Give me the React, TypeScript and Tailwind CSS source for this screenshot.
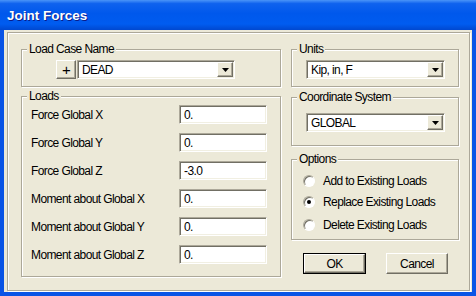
import React from "react";

const raised =
  "bg-[#ece9d8] border border-t-white border-l-white border-r-[#716f64] border-b-[#716f64] shadow-[inset_-1px_-1px_0_#aca899]";
const sunken =
  "bg-white border border-t-[#aca899] border-l-[#aca899] border-r-white border-b-white shadow-[inset_1px_1px_0_#716f64,inset_-1px_-1px_0_#f1efe2]";
const etched =
  "border border-[#aca899] shadow-[inset_1px_1px_0_#fff,1px_1px_0_#fff]";

function Legend({ children }: { children: React.ReactNode }) {
  return (
    <div className="-mt-[7px] ml-[5px] px-[2px] w-fit bg-[#ece9d8] leading-[13px] h-[13px] whitespace-nowrap">
      {children}
    </div>
  );
}

function Arrow() {
  return (
    <svg width="7" height="4" viewBox="0 0 7 4">
      <path d="M0 0H7L3.5 4Z" fill="#000" />
    </svg>
  );
}

function Combo({ value, w }: { value: string; w: string }) {
  return (
    <div className={`${sunken} ${w} h-[19px] flex items-stretch p-[1px]`}>
      <div className="flex-1 flex items-center pl-[3px] leading-none">{value}</div>
      <div className={`${raised} w-[16px] flex items-center justify-center`}>
        <Arrow />
      </div>
    </div>
  );
}

function Field({ value }: { value: string }) {
  return (
    <div className={`${sunken} w-[88px] h-[19px] flex items-center pl-[4px] leading-none`}>
      {value}
    </div>
  );
}

function Radio({ checked, label, cls }: { checked?: boolean; label: string; cls?: string }) {
  return (
    <div className={`flex items-center h-[14px] ${cls ?? ""}`}>
      <div className="w-[12px] h-[12px] rounded-full border border-t-[#aca899] border-l-[#aca899] border-r-white border-b-white bg-white shadow-[inset_1px_1px_0_#716f64] flex items-center justify-center">
        {checked && <div className="w-[4px] h-[4px] rounded-full bg-black" />}
      </div>
      <span className="ml-[8px] whitespace-nowrap">{label}</span>
    </div>
  );
}

export default function App() {
  const rows: [string, string][] = [
    ["Force Global X", "0."],
    ["Force Global Y", "0."],
    ["Force Global Z", "-3.0"],
    ["Moment about Global X", "0."],
    ["Moment about Global Y", "0."],
    ["Moment about Global Z", "0."],
  ];
  return (
    <div className="w-[476px] h-[296px] bg-[#0a54e6] flex flex-col font-['Liberation_Sans',Arial,sans-serif] text-[12px] tracking-[-0.6px] text-black">
      <div className="h-[30px] shrink-0 flex items-center pl-[7px] pt-[2px] bg-[linear-gradient(to_bottom,#4a94f8_0%,#0f62ee_12%,#0058ec_45%,#005cf0_80%,#0048d0_100%)]">
        <span className="text-white font-bold text-[13.5px] tracking-normal [text-shadow:1px_1px_0_#0a1c8a]">
          Joint Forces
        </span>
      </div>
      <div className="flex-1 mx-[4px] mb-[4px] bg-[#ece9d8] flex flex-col pl-[3px] pr-[2px] pt-[2px] pb-[1px]">
        <div className={`${etched} flex-1 flex gap-[10px] pl-[13px] pt-[16px]`}>
          {/* left column */}
          <div className="w-[260px] flex flex-col">
            <div className={`${etched} h-[38px] flex flex-col`}>
              <Legend>Load Case Name</Legend>
              <div className="mt-[4px] pl-[34px] flex">
                <div className={`${raised} w-[20px] h-[19px] mr-[1px] flex items-center justify-center text-[15px] font-light leading-none`}>
                  +
                </div>
                <Combo value="DEAD" w="w-[158px]" />
              </div>
            </div>
            <div className={`${etched} mt-[9px] h-[181px] flex flex-col`}>
              <Legend>Loads</Legend>
              <div className="mt-[2px] flex flex-col gap-[9px] pl-[9px]">
                {rows.map(([l, v]) => (
                  <div key={l} className="flex items-center h-[19px]">
                    <span className="w-[148px] whitespace-nowrap">{l}</span>
                    <Field value={v} />
                  </div>
                ))}
              </div>
            </div>
          </div>
          {/* right column */}
          <div className="w-[168px] flex flex-col">
            <div className={`${etched} h-[38px] flex flex-col`}>
              <Legend>Units</Legend>
              <div className="mt-[4px] pl-[14px] flex">
                <Combo value="Kip, in, F" w="w-[139px]" />
              </div>
            </div>
            <div className={`${etched} mt-[10px] h-[49px] flex flex-col`}>
              <Legend>Coordinate System</Legend>
              <div className="mt-[9px] pl-[14px] flex">
                <Combo value="GLOBAL" w="w-[139px]" />
              </div>
            </div>
            <div className={`${etched} mt-[13px] h-[81px] flex flex-col`}>
              <Legend>Options</Legend>
              <div className="mt-[8px] pl-[11px] flex flex-col">
                <Radio label="Add to Existing Loads" />
                <Radio checked cls="mt-[7px]" label="Replace Existing Loads" />
                <Radio cls="mt-[9px]" label="Delete Existing Loads" />
              </div>
            </div>
            <div className="mt-[13px] flex pl-[12px] gap-[20px]">
              <div className="w-[63px] h-[21px] border border-black flex">
                <div className={`${raised} flex-1 flex items-center justify-center`}>OK</div>
              </div>
              <div className={`${raised} w-[62px] h-[21px] flex items-center justify-center`}>
                Cancel
              </div>
            </div>
          </div>
        </div>
      </div>
    </div>
  );
}
